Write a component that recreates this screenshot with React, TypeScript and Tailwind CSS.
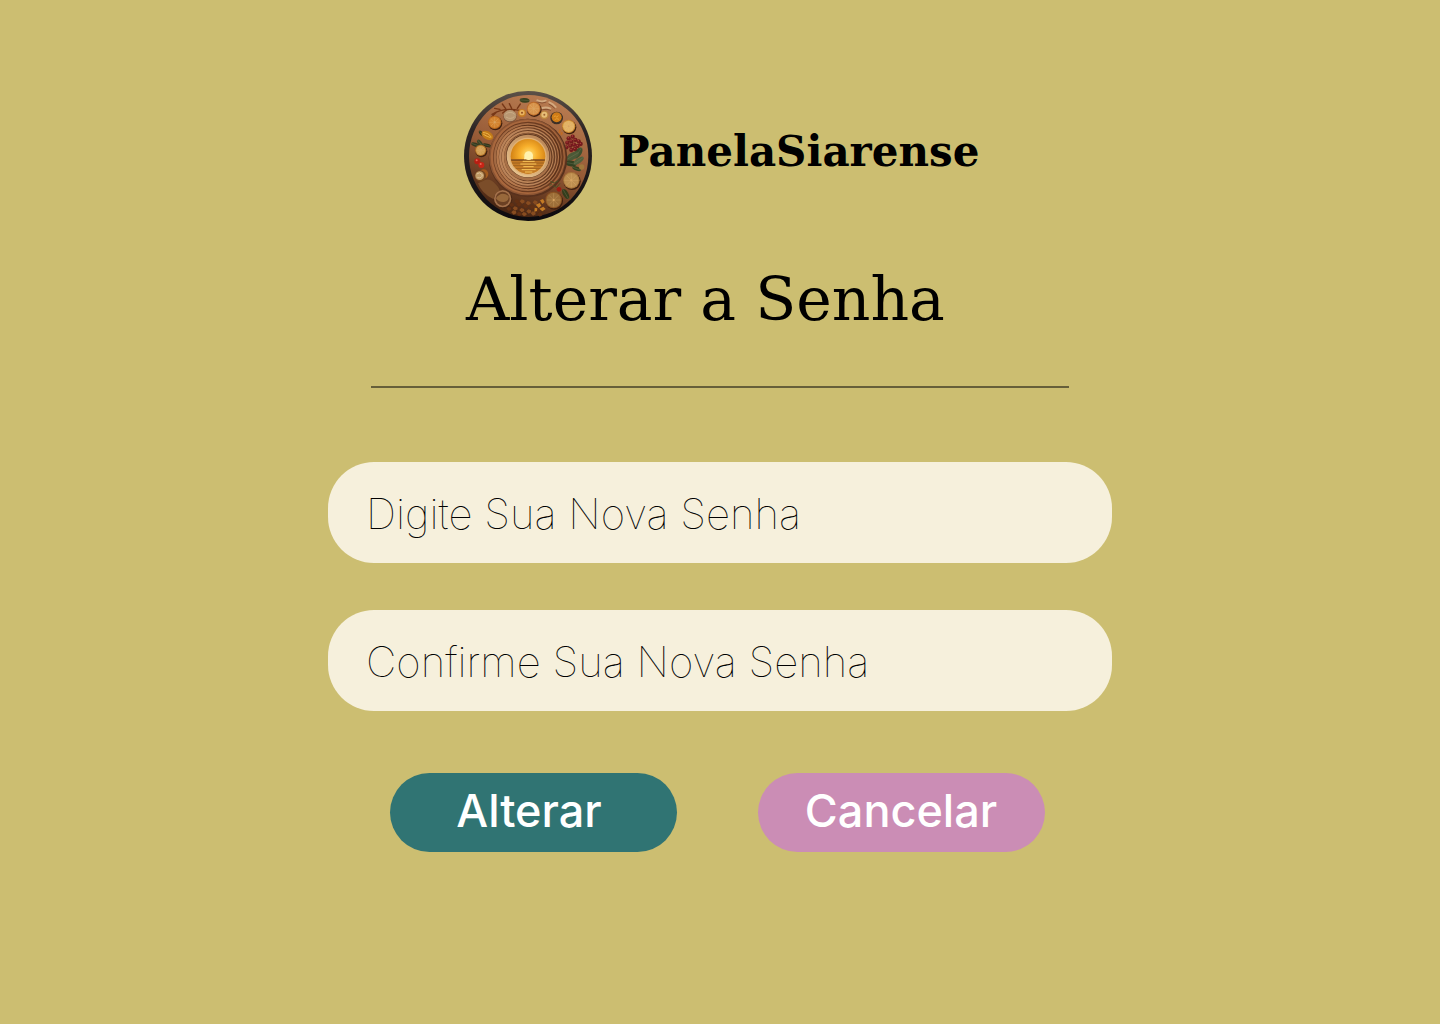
import React from "react";

const slices = [
  { x: 116, y: 115, r: 20, rim: "#b9681f", flesh: "#d3832f" },
  { x: 233, y: 74, r: 21, rim: "#bd6c2a", flesh: "#d8944c" },
  { x: 338, y: 127, r: 20, rim: "#cc8a33", flesh: "#e2b264" },
  { x: 74, y: 199, r: 17, rim: "#b17127", flesh: "#d19e52" },
  { x: 346, y: 289, r: 25, rim: "#a8743a", flesh: "#be8f50" },
  { x: 293, y: 348, r: 25, rim: "#8d5423", flesh: "#9d6f39" },
];

const rings = [
  { r: 111, c: "#a8673d" },
  { r: 106, c: "#6b3b20" },
  { r: 102, c: "#a36a43" },
  { r: 97, c: "#5c3119" },
  { r: 94, c: "#b5794d" },
  { r: 89, c: "#6d3e23" },
  { r: 86, c: "#b98359" },
  { r: 81, c: "#6b3f24" },
  { r: 78, c: "#bd8659" },
  { r: 73, c: "#683d23" },
  { r: 71, c: "#a87148" },
];

const leaves = [
  { x: 206, y: 49, rx: 15, ry: 7, a: 5, c: "#39421f" },
  { x: 76, y: 148, rx: 10, ry: 5, a: 50, c: "#33361a" },
  { x: 58, y: 182, rx: 13, ry: 6, a: 20, c: "#343a1f" },
  { x: 72, y: 177, rx: 12, ry: 6, a: 50, c: "#3d4325" },
  { x: 93, y: 184, rx: 13, ry: 5, a: 15, c: "#303319" },
  { x: 366, y: 207, rx: 19, ry: 10, a: -55, c: "#40502f" },
  { x: 350, y: 216, rx: 21, ry: 10, a: -30, c: "#4c5937" },
  { x: 344, y: 238, rx: 18, ry: 9, a: 10, c: "#334122" },
  { x: 368, y: 230, rx: 18, ry: 8, a: -35, c: "#52603c" },
  { x: 362, y: 254, rx: 14, ry: 6, a: 20, c: "#35421f" },
  { x: 329, y: 330, rx: 17, ry: 8, a: 60, c: "#343c1c" },
];

const berries = [
  [338, 163], [350, 158], [334, 176], [346, 172], [358, 168], [368, 172],
  [331, 190], [343, 185], [354, 182], [365, 186], [346, 198], [357, 195], [374, 180],
];

const crumbs = [
  [166, 362], [177, 373], [188, 361], [197, 378], [208, 366], [218, 382],
  [228, 368], [237, 355], [243, 379], [173, 385], [189, 389], [204, 390],
  [182, 352], [216, 357], [158, 374], [231, 388], [251, 391], [198, 352],
];

function Logo() {
  return (
    <svg viewBox="24 21 384 390" className="h-[130px] w-32 shrink-0" role="img" aria-label="PanelaSiarense">
      <defs>
        <linearGradient id="rim" x1="0" y1="0" x2="0" y2="1">
          <stop offset="0" stopColor="#5c5148" />
          <stop offset="0.3" stopColor="#2c2524" />
          <stop offset="1" stopColor="#0d0a0e" />
        </linearGradient>
        <linearGradient id="wood" x1="0.65" y1="0" x2="0.3" y2="1">
          <stop offset="0" stopColor="#b97c51" />
          <stop offset="0.5" stopColor="#965a36" />
          <stop offset="1" stopColor="#40200f" />
        </linearGradient>
        <radialGradient id="sky" cx="0.52" cy="0.45" r="0.55">
          <stop offset="0" stopColor="#ffe278" />
          <stop offset="0.45" stopColor="#f8b02c" />
          <stop offset="1" stopColor="#cf7d12" />
        </radialGradient>
        <linearGradient id="cream" x1="1" y1="0" x2="0.3" y2="1">
          <stop offset="0" stopColor="#b47c4d" />
          <stop offset="1" stopColor="#e8c48f" />
        </linearGradient>
        <clipPath id="window"><circle cx="216" cy="217" r="52" /></clipPath>
      </defs>
      <ellipse cx="216" cy="216" rx="192" ry="195" fill="url(#rim)" />
      <ellipse cx="218" cy="216" rx="179" ry="183" fill="url(#wood)" />
      <path d="M79 292q20-15 42 11 24 25-8 43-36-17-47-48z" fill="#7b4d29" />

      <g stroke="#763717" strokeWidth="4" fill="none" strokeLinecap="round">
        <path d="M108 91q35-21 82-12M132 76l-16-3M149 74l-10-14M167 73l-7-14M184 73l9-13M153 77l-13 10M176 78l-10 13M121 85l-14 14" />
      </g>
      <g stroke="#d3aa80" strokeWidth="6" fill="none" strokeLinecap="round">
        <path d="M244 49q13 6 25 1M280 55q11 4 19 14M258 72q15-3 25 2" />
      </g>
      <g stroke="#6f3c22" strokeWidth="2" fill="none">
        <path d="M244 54q15 6 27 0M278 60q10 4 18 13M259 77q15-3 26 2" />
      </g>

      {leaves.map((l) => (
        <g key={`${l.x}-${l.y}`} transform={`rotate(${l.a} ${l.x} ${l.y})`}>
          <ellipse cx={l.x} cy={l.y} rx={l.rx} ry={l.ry} fill={l.c} />
          <path d={`M${l.x - l.rx} ${l.y}h${l.rx * 2}`} stroke="#78805a" strokeWidth="1" />
        </g>
      ))}

      {slices.map((s) => (
        <g key={`${s.x}-${s.y}`}>
          <circle cx={s.x + 2} cy={s.y + 3} r={s.r + 1} fill="#40200f" />
          <circle cx={s.x} cy={s.y} r={s.r} fill={s.rim} />
          <circle cx={s.x} cy={s.y} r={s.r - 3} fill={s.flesh} />
          <path
            d={`M${s.x - s.r + 5} ${s.y}h${s.r * 2 - 10}M${s.x} ${s.y - s.r + 5}v${s.r * 2 - 10}M${s.x - s.r * 0.55} ${s.y - s.r * 0.55}l${s.r * 1.1} ${s.r * 1.1}M${s.x + s.r * 0.55} ${s.y - s.r * 0.55}l${-s.r * 1.1} ${s.r * 1.1}`}
            stroke="#edc17b"
            strokeOpacity="0.5"
            strokeWidth="1.5"
          />
          <circle cx={s.x} cy={s.y} r="3" fill="#d9a461" />
        </g>
      ))}

      <ellipse cx="162" cy="97" rx="20" ry="18" fill="#76503a" />
      <ellipse cx="162" cy="95" rx="19" ry="17" fill="#b89772" />
      <path d="M149 91q13-12 27 0M150 99q14 9 25-1" stroke="#d1b690" strokeWidth="2" fill="none" />
      <circle cx="198" cy="87" r="12" fill="#c57a22" />
      <circle cx="198" cy="86" r="8" fill="#e8b25f" />
      <circle cx="198" cy="86" r="3" fill="#925020" />
      <circle cx="265" cy="93" r="13" fill="#bd853f" />
      <circle cx="265" cy="92" r="9" fill="#e6bd77" />
      <circle cx="265" cy="92" r="3" fill="#9e6431" />
      <circle cx="302" cy="102" r="19" fill="#3d3027" />
      <circle cx="302" cy="100" r="15" fill="#d07c17" />
      <path d="M293 99l5-4 4 5 5-6M296 107l6-3 7 2" stroke="#f1ad3b" strokeWidth="2" fill="none" />
      <ellipse cx="94" cy="154" rx="19" ry="12" fill="#c27a18" transform="rotate(30 94 154)" />
      <path d="M81 146q17 0 25 14M82 151q12 7 22 10" stroke="#efb648" strokeWidth="3" fill="none" />

      {berries.map(([x, y]) => (
        <g key={`${x}-${y}`}>
          <circle cx={x} cy={y} r="6.5" fill="#741b1d" />
          <circle cx={x - 1} cy={y - 2} r="2" fill="#b84442" />
        </g>
      ))}
      <g>
        <circle cx="64" cy="232" r="9" fill="#b81e12" />
        <circle cx="76" cy="243" r="9" fill="#c82416" />
        <circle cx="309" cy="316" r="7" fill="#9b1d13" />
        <circle cx="62" cy="229" r="3" fill="#e86652" />
        <circle cx="74" cy="240" r="3" fill="#e86652" />
      </g>
      <circle cx="377" cy="249" r="8" fill="#a2783c" />
      <circle cx="83" cy="270" r="14" fill="#a35b1e" />
      <circle cx="73" cy="276" r="17" fill="#73451f" />
      <circle cx="71" cy="275" r="13" fill="#c09a65" />
      <path d="M62 270q9-8 17 2-1 12-15 9" stroke="#dfc49a" strokeWidth="3" fill="none" />

      <circle cx="216" cy="222" r="118" fill="#58311d" />
      <circle cx="214" cy="219" r="115" fill="#8b5433" />
      {rings.map((ring, i) => (
        <circle key={ring.r} cx={i % 2 ? 217 : 215} cy="219" r={ring.r} fill={ring.c} />
      ))}
      <circle cx="216" cy="215" r="66" fill="#633b21" />
      <circle cx="216" cy="216" r="64" fill="url(#cream)" />
      <circle cx="216" cy="217" r="56" fill="#e0b173" />
      <circle cx="216" cy="217" r="52" fill="url(#sky)" />
      <g clipPath="url(#window)">
        <path d="M164 226h104v44H164z" fill="#c47a25" />
        <path d="M164 226h104v5H164z" fill="#87521e" />
        <path d="M165 237h102M170 245h93M178 254h78" stroke="#8f591d" strokeWidth="2" />
        <path d="M200 232h36M193 240h48M202 248h31M197 257h42M207 264h22" stroke="#f9c65a" strokeWidth="3" />
        <path d="M204 226a13.5 13.5 0 1 1 27 0z" fill="#fff4b5" />
        <circle cx="218" cy="215" r="13" fill="#fff2ae" />
      </g>

      <circle cx="141" cy="346" r="28" fill="#492714" />
      <circle cx="140" cy="344" r="26" fill="#a4714b" />
      <circle cx="140" cy="344" r="21" fill="#6b4023" />
      <path d="M120 343q15-23 38-7 2 15-14 18-17 1-24-11z" fill="#98683b" />
      {crumbs.map(([x, y], i) => (
        <path key={`${x}-${y}`} d={`M${x - 7} ${y}l6-6 8 3 1 6-8 4z`} fill={i % 2 ? "#884c20" : "#623013"} />
      ))}
      <path d="M239 362l12-5 5 8-8 7zM252 349l9-4 5 9-7 6zM250 374l12-6 7 7-10 7zM236 371l8 2-1 8-8 2z" fill="#c47b25" />
      <path d="M283 292l12 5 12-7M291 305l11 5 10-12M288 299l-8 7" stroke="#485026" strokeWidth="3" fill="none" />
      <path d="M312 137l-2 10M318 145l-2 7" stroke="#c36b20" strokeWidth="5" />
    </svg>
  );
}

function PasswordField({ id, label }: { id: string; label: string }) {
  return (
    <input
      id={id}
      name={id}
      type="password"
      aria-label={label}
      placeholder={label}
      className="block h-[101px] w-full rounded-[46px] bg-[#f6f0dc] px-[38px] pt-0.5 font-['Inter',sans-serif] text-[42px] font-thin text-black outline-none placeholder:text-black placeholder:opacity-100"
    />
  );
}

export default function App() {
  return (
    <main className="flex min-h-screen flex-col items-center bg-[#ccbe71] px-6 pt-[91px] pb-12 text-black">
      <div className="w-full max-w-[512px] font-['DejaVu_Serif',serif]">
        <header className="flex items-center gap-[26px]">
          <Logo />
          <p className="-mt-2 text-[42px] leading-[48px] font-bold whitespace-nowrap">PanelaSiarense</p>
        </header>
        <h1 className="mt-[38px] pl-0.5 text-[60px] leading-[80px] whitespace-nowrap">Alterar a Senha</h1>
      </div>
      <hr className="mt-[47px] w-full max-w-[698px] border-t-2 border-[#665f39]" />
      <form className="mt-[74px] flex w-full max-w-[784px] flex-col items-center" onSubmit={(e) => e.preventDefault()}>
        <div className="flex w-full flex-col gap-[47px]">
          <PasswordField id="nova-senha" label="Digite Sua Nova Senha" />
          <PasswordField id="confirmar-senha" label="Confirme Sua Nova Senha" />
        </div>
        <div className="mt-[62px] mr-1.5 flex gap-[81px] font-['Inter',sans-serif] text-[45px] leading-[52px] font-medium text-white">
          <button type="submit" className="h-[79px] w-[287px] rounded-full bg-[#307473] pr-2 pb-1">Alterar</button>
          <button type="button" className="h-[79px] w-[287px] rounded-full bg-[#cb8db5] pb-1">Cancelar</button>
        </div>
      </form>
    </main>
  );
}
